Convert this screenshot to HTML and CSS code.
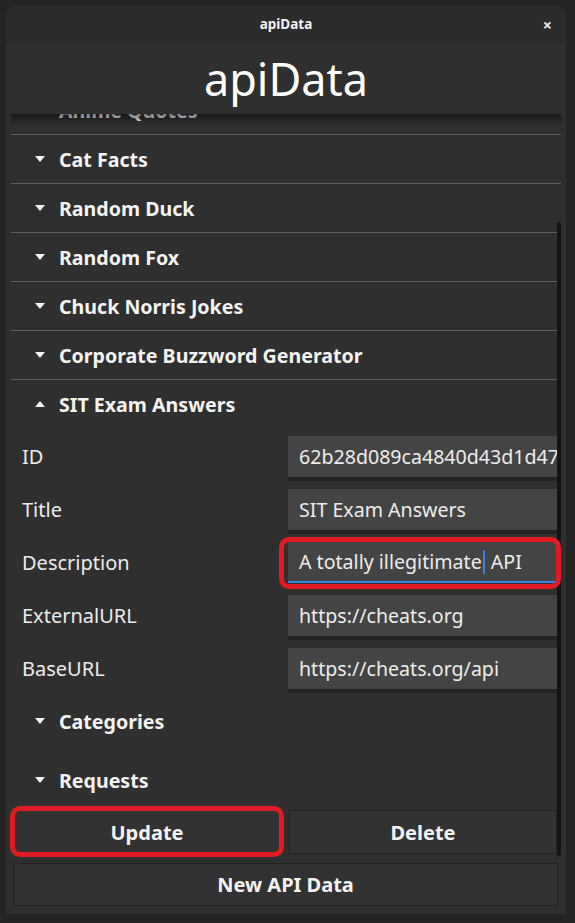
FILE: index.html
```html
<!DOCTYPE html>
<html>
<head>
<meta charset="utf-8">
<link rel="stylesheet" href="styles.css">
</head>
<body>
<div class="window">
  <div class="titlebar">
    <span class="title">apiData</span>
    <span class="close">×</span>
  </div>
  <div class="content">
    <h1 class="heading">apiData</h1>
    <div class="scroll">
      <div class="scroll-inner">
        <div class="acc-head sep"><svg class="tri" viewBox="0 0 10 6"><path d="M0 0H10L5 6Z"/></svg><span>Anime Quotes</span></div>
        <div class="acc-head sep"><svg class="tri" viewBox="0 0 10 6"><path d="M0 0H10L5 6Z"/></svg><span>Cat Facts</span></div>
        <div class="acc-head sep"><svg class="tri" viewBox="0 0 10 6"><path d="M0 0H10L5 6Z"/></svg><span>Random Duck</span></div>
        <div class="acc-head sep"><svg class="tri" viewBox="0 0 10 6"><path d="M0 0H10L5 6Z"/></svg><span>Random Fox</span></div>
        <div class="acc-head sep"><svg class="tri" viewBox="0 0 10 6"><path d="M0 0H10L5 6Z"/></svg><span>Chuck Norris Jokes</span></div>
        <div class="acc-head sep"><svg class="tri" viewBox="0 0 10 6"><path d="M0 0H10L5 6Z"/></svg><span>Corporate Buzzword Generator</span></div>
        <div class="acc-head"><svg class="tri" viewBox="0 0 10 6"><path d="M0 6H10L5 0Z"/></svg><span>SIT Exam Answers</span></div>
        <div class="acc-body">
          <div class="form">
            <label class="lbl">ID</label>
            <div class="field"><span class="val">62b28d089ca4840d43d1d47e</span></div>
            <label class="lbl">Title</label>
            <div class="field"><span class="val">SIT Exam Answers</span></div>
            <label class="lbl">Description</label>
            <div class="field focused highlight"><span class="val">A totally illegitimate<span class="caret"></span> API</span></div>
            <label class="lbl">ExternalURL</label>
            <div class="field"><span class="val">https://cheats.org</span></div>
            <label class="lbl">BaseURL</label>
            <div class="field"><span class="val">https://cheats.org/api</span></div>
          </div>
          <div class="acc-head sub"><svg class="tri" viewBox="0 0 10 6"><path d="M0 0H10L5 6Z"/></svg><span>Categories</span></div>
          <div class="acc-head sub req"><svg class="tri" viewBox="0 0 10 6"><path d="M0 0H10L5 6Z"/></svg><span>Requests</span></div>
          <div class="btn-row">
            <button class="btn highlight">Update</button>
            <button class="btn">Delete</button>
          </div>
        </div>
      </div>
      <div class="scroll-shadow"></div>
      <div class="scroll-thumb"></div>
    </div>
    <button class="btn wide">New API Data</button>
  </div>
</div>
</body>
</html>
```

FILE: styles.css
```css
* { box-sizing: border-box; }
html, body { margin: 0; padding: 0; }
body {
  background: #242424;
  font-family: "Noto Sans", "Open Sans", sans-serif;
  color: #f2f2f2;
  width: 575px;
  height: 923px;
  overflow: hidden;
}
.window {
  margin: 6px 0 0 6px;
  width: 560px;
  height: 908px;
  background: #2f2f2f;
  border-radius: 9px 9px 0 0;
  display: flex;
  flex-direction: column;
  overflow: hidden;
}
.titlebar {
  height: 36px;
  background: #2b2b2b;
  display: flex;
  align-items: center;
  justify-content: center;
  position: relative;
}
.title {
  font-size: 13.5px;
  font-weight: 700;
  color: #f4f4f4;
}
.close {
  position: absolute;
  right: 14px;
  top: 8px;
  font-size: 16px;
  font-weight: 700;
  color: #e8e8e8;
}
.content {
  flex: 1;
  display: flex;
  flex-direction: column;
  padding: 0 5px 8px 5px;
}
.heading {
  margin: 0;
  height: 72px;
  display: flex;
  align-items: center;
  justify-content: center;
  font-size: 45px;
  font-weight: 400;
  color: #ffffff;
}
.scroll {
  position: relative;
  height: 744px;
  overflow: hidden;
  margin-left: -5px;
  padding-left: 5px;
}
.scroll-inner {
  margin-top: -28px;
}
.acc-head {
  height: 48px;
  display: flex;
  align-items: center;
  gap: 14px;
  padding-left: 24px;
  font-size: 19.6px;
  font-weight: 700;
  color: #f4f4f4;
}
.acc-head.sep {
  height: 49px;
  border-bottom: 1px solid #5d5d5d;
}
.tri {
  width: 10px;
  height: 6px;
  fill: #f4f4f4;
  flex: none;
}
.acc-body {
  padding-top: 8px;
}
.form {
  display: grid;
  grid-template-columns: 266px 1fr;
  row-gap: 12px;
  padding-left: 11px;
  align-items: center;
}
.lbl {
  font-size: 20px;
  color: #ececec;
}
.field {
  height: 41px;
  background: #444444;
  display: flex;
  align-items: center;
  padding-left: 11px;
  white-space: nowrap;
  overflow: hidden;
  box-shadow: 0 4px 0 #232323;
  position: relative;
}
.field.focused {
  border-bottom: 2px solid #3584e4;
  box-shadow: none;
}
.val {
  font-size: 19.6px;
  color: #ededed;
}
.caret {
  display: inline-block;
  width: 2px;
  height: 24px;
  background: #3584e4;
  vertical-align: -5px;
  margin: 0 1px;
}
.highlight { position: relative; overflow: visible; }
.highlight::after {
  content: "";
  position: absolute;
  inset: -5px 0 -8px -9px;
  border: 5px solid #e01b24;
  border-radius: 10px;
  pointer-events: none;
  z-index: 2;
}
.acc-head.sub {
  margin-top: 8px;
}
.acc-head.req {
  margin-top: 11px;
}
.btn-row {
  display: grid;
  grid-template-columns: 1fr 1fr;
  gap: 8px;
  padding: 6px 4px 0 2px;
}
.btn {
  height: 44px;
  background: #323232;
  border: 1px solid #222222;
  color: #f4f4f4;
  font-family: "Noto Sans", "Open Sans", sans-serif;
  font-size: 20px;
  font-weight: 700;
  padding: 0;
}
.btn-row .btn.highlight::after {
  inset: -5px -4px -4px -4px;
}
.btn.wide {
  margin: 5px 3px 0 2px;
  height: 43px;
}
.scroll-shadow {
  position: absolute;
  left: 5px;
  right: 0;
  top: 0;
  height: 11px;
  background: linear-gradient(rgba(0,0,0,0.5), rgba(0,0,0,0));
}
.scroll-thumb {
  position: absolute;
  right: 0;
  top: 108px;
  width: 4px;
  height: 634px;
  background: #141414;
  border-radius: 2px;
}
```
